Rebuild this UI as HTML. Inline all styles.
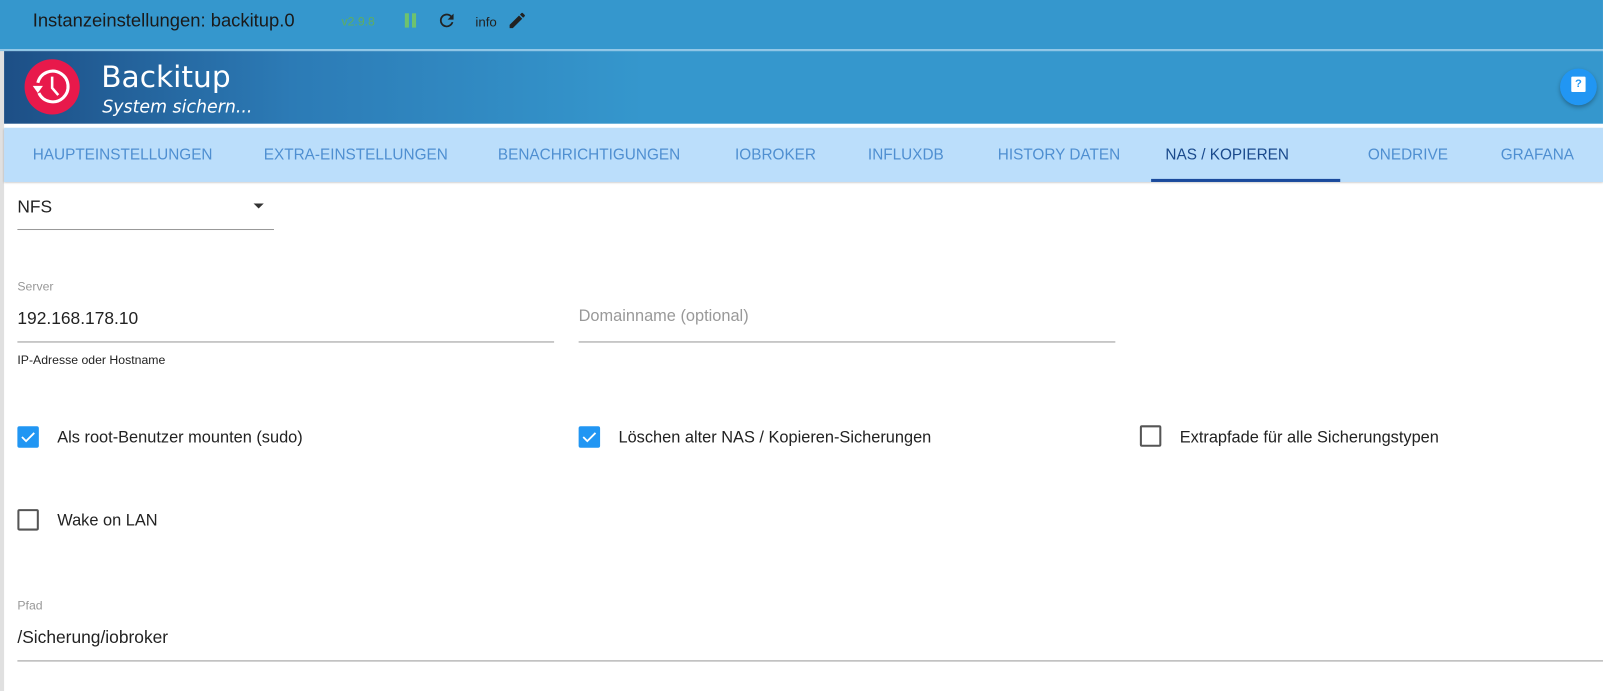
<!DOCTYPE html>
<html><head><meta charset="utf-8"><style>
*{margin:0;padding:0;box-sizing:border-box}
body{width:1603px;height:691px;overflow:hidden;background:#fff;font-family:"Liberation Sans",sans-serif;position:relative}
#w{position:absolute;left:0;top:0;width:1568px;height:676px;transform:scale(1.0223);transform-origin:0 0}
.a{position:absolute;white-space:nowrap}
.top{left:0;top:0;width:1568px;height:48px;background:#3597cd}
.hdr{left:4px;top:50px;width:1564px;height:71px;background:linear-gradient(90deg,#1d4f86 0%,#2c7bb6 18%,#3597cd 40%,#3597cd 100%)}
.tabs{left:4px;top:125px;width:1564px;height:53px;background:#bbdefb;box-shadow:0 1px 2px rgba(0,0,0,.25)}
.tab{top:143px;font-size:15px;color:#4f8fd1}
.lbl{font-size:12px;color:#999}
.val{font-size:17px;color:#222}
.line{height:1px;background:#999}
.cb{width:21px;height:21px;border-radius:2px}
.on{background:#2196f3}
.off{border:2px solid #555}
.ct{font-size:16px;color:#222}
</style></head><body><div id="w">
<div class="a" style="left:0;top:0;width:4px;height:676px;background:#e0e0e0"></div>
<div class="a top"></div>
<div class="a" style="left:0;top:48px;width:1568px;height:2px;background:#8ec5e6"></div>
<div class="a" style="left:32px;top:10px;font-size:18px;color:#1a1a1a">Instanzeinstellungen: backitup.0</div>
<div class="a" style="left:334px;top:14px;font-size:12px;color:#5fae5f">v2.9.8</div>
<div class="a" style="left:396px;top:13px;width:4px;height:14px;background:#6ec26e"></div>
<div class="a" style="left:403px;top:13px;width:4px;height:14px;background:#6ec26e"></div>
<svg class="a" style="left:427px;top:10px" width="20" height="20" viewBox="0 0 24 24"><path fill="#222" d="M17.65 6.35A7.96 7.96 0 0 0 12 4a8 8 0 1 0 7.73 10h-2.08A6 6 0 1 1 12 6c1.66 0 3.14.69 4.22 1.78L13 11h7V4l-2.35 2.35z"/></svg>
<div class="a" style="left:465px;top:14px;font-size:13px;color:#222">info</div>
<svg class="a" style="left:496px;top:10px" width="20" height="20" viewBox="0 0 24 24"><path fill="#222" d="M3 17.25V21h3.75L17.81 9.940l-3.75-3.75L3 17.25zM20.71 7.04a1 1 0 0 0 0-1.41l-2.34-2.34a1 1 0 0 0-1.41 0l-1.83 1.83 3.75 3.75 1.83-1.83z"/></svg>
<div class="a hdr"></div>
<svg class="a" style="left:23px;top:57px" width="56" height="56" viewBox="0 0 56 56"><circle cx="28" cy="28" r="27" fill="#e8194b"/><path d="M15 34 A15 15 0 1 0 14 24" fill="none" stroke="#fff" stroke-width="3"/><path d="M9 27 l5 7 l5 -7z" fill="#fff"/><path d="M28 18 v11 l6 7" fill="none" stroke="#fff" stroke-width="2.5"/></svg>
<div class="a" style="left:99px;top:58px;font-size:29px;color:#fff;font-family:'DejaVu Sans',sans-serif">Backitup</div>
<div class="a" style="left:100px;top:95px;font-size:17px;color:#fff;font-style:italic;font-family:'DejaVu Sans',sans-serif">System sichern...</div>
<div class="a" style="left:1526px;top:67px;width:36px;height:36px;border-radius:50%;background:#2196f3;box-shadow:0 2px 4px rgba(0,0,0,.3)"></div>
<div class="a" style="left:1537px;top:75px;width:14px;height:15px;background:#fff;border-radius:1px;font-size:11px;color:#2196f3;text-align:center;line-height:15px;font-weight:bold">?</div>
<div class="a tabs"></div>
<div class="a tab" style="left:32px">HAUPTEINSTELLUNGEN</div>
<div class="a tab" style="left:258px">EXTRA-EINSTELLUNGEN</div>
<div class="a tab" style="left:487px">BENACHRICHTIGUNGEN</div>
<div class="a tab" style="left:719px">IOBROKER</div>
<div class="a tab" style="left:849px">INFLUXDB</div>
<div class="a tab" style="left:976px">HISTORY DATEN</div>
<div class="a tab" style="left:1140px;color:#1a4a8c">NAS / KOPIEREN</div>
<div class="a tab" style="left:1338px">ONEDRIVE</div>
<div class="a tab" style="left:1468px">GRAFANA</div>
<div class="a" style="left:1126px;top:175px;width:185px;height:3px;background:#1a4a9c"></div>
<div class="a val" style="left:17px;top:193px">NFS</div>
<div class="a" style="left:248px;top:199px;width:0;height:0;border-left:5px solid transparent;border-right:5px solid transparent;border-top:5px solid #333"></div>
<div class="a line" style="left:17px;top:224px;width:251px"></div>
<div class="a lbl" style="left:17px;top:273px">Server</div>
<div class="a val" style="left:17px;top:302px">192.168.178.10</div>
<div class="a line" style="left:17px;top:334px;width:525px"></div>
<div class="a" style="left:17px;top:345px;font-size:12px;color:#222">IP-Adresse oder Hostname</div>
<div class="a" style="left:566px;top:301px;font-size:16px;color:#999">Domainname (optional)</div>
<div class="a line" style="left:566px;top:334px;width:525px"></div>
<div class="a cb on" style="left:17px;top:417px"></div>
<svg class="a" style="left:17px;top:417px" width="21" height="21" viewBox="0 0 21 21"><path d="M4.5 10.5 l4 4 l8 -8" fill="none" stroke="#fff" stroke-width="1.8"/></svg>
<div class="a ct" style="left:56px;top:420px">Als root-Benutzer mounten (sudo)</div>
<div class="a cb on" style="left:566px;top:417px"></div>
<svg class="a" style="left:566px;top:417px" width="21" height="21" viewBox="0 0 21 21"><path d="M4.5 10.5 l4 4 l8 -8" fill="none" stroke="#fff" stroke-width="1.8"/></svg>
<div class="a ct" style="left:605px;top:420px">Löschen alter NAS / Kopieren-Sicherungen</div>
<div class="a cb off" style="left:1115px;top:416px"></div>
<div class="a ct" style="left:1154px;top:420px">Extrapfade für alle Sicherungstypen</div>
<div class="a cb off" style="left:17px;top:498px"></div>
<div class="a ct" style="left:56px;top:501px">Wake on LAN</div>
<div class="a lbl" style="left:17px;top:585px">Pfad</div>
<div class="a val" style="left:17px;top:614px">/Sicherung/iobroker</div>
<div class="a line" style="left:17px;top:646px;width:1551px"></div>
</div></body></html>
